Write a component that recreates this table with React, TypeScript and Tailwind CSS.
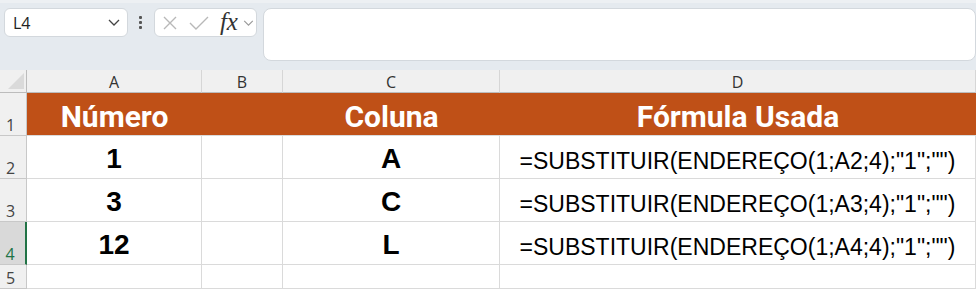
const COLS = ['A', 'B', 'C', 'D'];

const rows = [
  { n: '1', col: 'A', formula: '=SUBSTITUIR(ENDEREÇO(1;A2;4);"1";"")' },
  { n: '3', col: 'C', formula: '=SUBSTITUIR(ENDEREÇO(1;A3;4);"1";"")' },
  { n: '12', col: 'L', formula: '=SUBSTITUIR(ENDEREÇO(1;A4;4);"1";"")' },
];

function Chevron({ className }: { className?: string }) {
  return (
    <svg className={className} viewBox="0 0 12 7" fill="none">
      <path d="M1 1l5 5 5-5" stroke="currentColor" strokeWidth="1.3" />
    </svg>
  );
}

function Toolbar() {
  return (
    <div className="h-[70px] flex items-start pt-[5px] pl-[4px] border-t-[3px] border-[#edf0f3]">
      {/* Name box */}
      <div className="w-[126px] h-[29px] bg-white border border-[#d3d8dd] rounded-[6px] flex items-center justify-between pl-[8px] pr-[7px]">
        <span className="text-[16px] text-[#222] font-['Open_Sans',sans-serif]">L4</span>
        <Chevron className="w-[12px] h-[7px] text-[#444]" />
      </div>
      {/* Kebab */}
      <div className="w-[27px] h-[29px] flex flex-col items-center justify-center gap-[2px]">
        <span className="w-[3px] h-[3px] bg-[#555] rounded-[1px]" />
        <span className="w-[3px] h-[3px] bg-[#555] rounded-[1px]" />
        <span className="w-[3px] h-[3px] bg-[#555] rounded-[1px]" />
      </div>
      {/* Cancel / enter / fx */}
      <div className="w-[105px] h-[29px] bg-white border border-[#d3d8dd] rounded-[6px] flex items-center pl-[8px]">
        <svg className="w-[14px] h-[14px]" viewBox="0 0 14 14" fill="none">
          <path d="M1 1l12 12M13 1L1 13" stroke="#b8b8b8" strokeWidth="1.4" />
        </svg>
        <svg className="w-[20px] h-[14px] ml-[12px]" viewBox="0 0 20 14" fill="none">
          <path d="M1 7l6 6L19 1" stroke="#b8b8b8" strokeWidth="1.4" />
        </svg>
        <span className="ml-[11px] text-[25px] leading-none italic text-[#333] font-['Liberation_Serif',serif] -mt-[3px]">fx</span>
        <Chevron className="w-[11px] h-[6px] ml-[5px] text-[#999]" />
      </div>
      {/* Formula bar */}
      <div className="ml-[6px] w-[730px] h-[53px] bg-white border border-[#d3d8dd] rounded-[8px]" />
    </div>
  );
}

export default function App() {
  const headCell = 'flex items-end justify-center leading-none pb-[3px] text-[30px] font-bold text-white font-[Roboto,sans-serif]';
  const bodyCell = 'flex items-end justify-center leading-none pb-[5px] border-r border-b border-[#dadada] bg-white';
  const rowHead = 'flex items-end justify-center pr-[5px] pb-[2px] leading-none text-[16px] text-[#444] bg-[#f0f0f0] border-r border-b border-[#c8c8c8] font-[Open_Sans,sans-serif]';

  return (
    <div className="w-[976px] h-[289px] overflow-hidden bg-[#e5eaef]">
      <Toolbar />
      <div className="grid grid-cols-[27px_175px_81px_217px_476px] grid-rows-[23px_43px_43px_43px_43px_24px]">
        {/* Corner */}
        <div className="relative bg-[#f0f0f0] border-r border-b border-[#bcbcbc]">
          <svg className="absolute left-[8px] top-[3px] w-[16px] h-[16px]" viewBox="0 0 16 16">
            <path d="M16 0V16H0Z" fill="#dadada" />
          </svg>
        </div>
        {COLS.map((c) => (
          <div
            key={c}
            className="flex items-center justify-center pt-[1px] bg-[#f0f0f0] border-r border-b border-r-[#d6d6d6] border-b-[#bcbcbc] text-[16px] text-[#333] font-[Open_Sans,sans-serif]"
          >
            {c}
          </div>
        ))}

        {/* Row 1: header */}
        <div className={rowHead}>1</div>
        <div className="col-span-4 grid grid-cols-[175px_81px_217px_476px] bg-[#bf5017] border-b border-[#dadada]">
          <div className={headCell}>Número</div>
          <div />
          <div className={headCell}>Coluna</div>
          <div className={headCell}>Fórmula Usada</div>
        </div>

        {rows.map((r, i) => {
          const selected = i === 2;
          return [
            <div
              key={`h${i}`}
              className={
                selected
                  ? 'flex items-end justify-center pr-[5px] pb-[2px] leading-none text-[16px] text-[#217346] bg-[#d9d9d9] border-b border-[#c8c8c8] border-r-2 border-r-[#217346] font-[Open_Sans,sans-serif]'
                  : rowHead
              }
            >
              {i + 2}
            </div>,
            <div key={`a${i}`} className={`${bodyCell} text-[28px] font-bold text-black font-['Liberation_Sans',Arial,sans-serif]`}>
              {r.n}
            </div>,
            <div key={`b${i}`} className={bodyCell} />,
            <div key={`c${i}`} className={`${bodyCell} text-[28px] font-bold text-black font-['Liberation_Sans',Arial,sans-serif]`}>
              {r.col}
            </div>,
            <div key={`d${i}`} className={`${bodyCell} text-[23px] text-black font-['Liberation_Sans',Arial,sans-serif]`}>
              {r.formula}
            </div>,
          ];
        })}

        {/* Row 5 */}
        <div className={rowHead}>5</div>
        <div className={bodyCell} />
        <div className={bodyCell} />
        <div className={bodyCell} />
        <div className={bodyCell} />
      </div>
    </div>
  );
}
